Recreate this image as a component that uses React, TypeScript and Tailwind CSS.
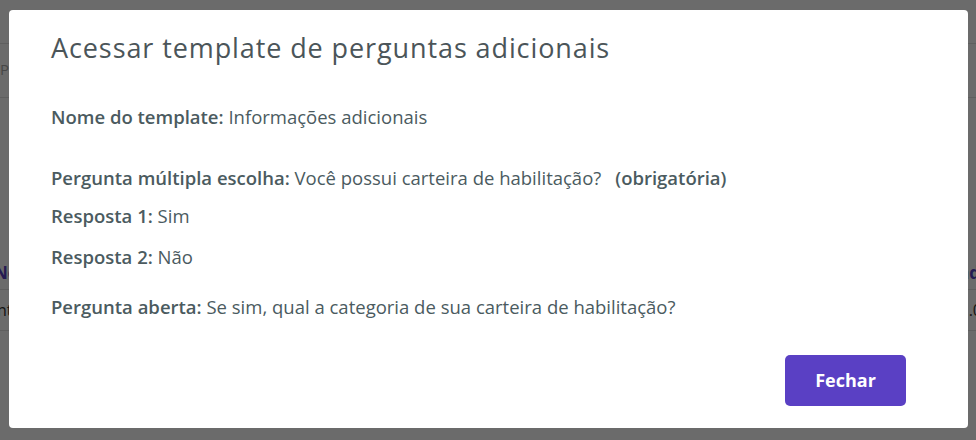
import React from 'react';

function Field({ label, value, extra }: { label: string; value: string; extra?: string }) {
  return (
    <p className="text-[18.5px] leading-6 text-[#4b5b5f]">
      <span className="font-semibold">{label}</span> {value}
      {extra && <span className="ml-3.5 font-semibold">{extra}</span>}
    </p>
  );
}

export default function App() {
  return (
    <div className="relative h-[440px] w-[976px] overflow-hidden bg-white font-['Open_Sans',sans-serif]">
      {/* page behind the modal */}
      <div className="flex flex-col">
        <div className="mt-[43px] h-[55px] border-y border-[#e3e3e3] pt-[14px] text-[15px] text-[#aaa]">
          Pesquisar
        </div>
        <div className="mt-[158px] flex h-[34px] items-center justify-between border-b border-[#e3e3e3] text-[17px] font-bold text-[#5a40c4]">
          <span className="-ml-[6px]">Nome</span>
          <span className="-mr-[14px]">Idade</span>
        </div>
        <div className="flex h-[41px] items-center justify-between border-b border-[#e3e3e3] text-[16px] text-[#333]">
          <span className="-ml-[3px]">nt</span>
          <span className="-mr-[6px]">1.0</span>
        </div>
      </div>

      {/* overlay */}
      <div className="absolute inset-0 bg-black/[0.58]">
        <div className="ml-[9px] mt-[10px] flex h-[418px] w-[959px] flex-col rounded bg-white px-[42px] pt-[20px]">
          <h2 className="text-[27px] leading-9 tracking-[0.9px] text-[#4b5559]">
            Acessar template de perguntas adicionais
          </h2>
          <div className="mt-[39px]">
            <Field label="Nome do template:" value="Informações adicionais" />
          </div>
          <div className="mt-[37px]">
            <Field
              label="Pergunta múltipla escolha:"
              value="Você possui carteira de habilitação?"
              extra="(obrigatória)"
            />
          </div>
          <div className="mt-[14px]">
            <Field label="Resposta 1:" value="Sim" />
          </div>
          <div className="mt-[17px]">
            <Field label="Resposta 2:" value="Não" />
          </div>
          <div className="mt-[26px]">
            <Field label="Pergunta aberta:" value="Se sim, qual a categoria de sua carteira de habilitação?" />
          </div>
          <div className="mt-[36px] flex justify-end pr-[20px]">
            <button className="h-[51px] w-[121px] rounded-[5px] bg-[#5a40c4] text-[18px] font-bold text-white">
              Fechar
            </button>
          </div>
        </div>
      </div>
    </div>
  );
}
